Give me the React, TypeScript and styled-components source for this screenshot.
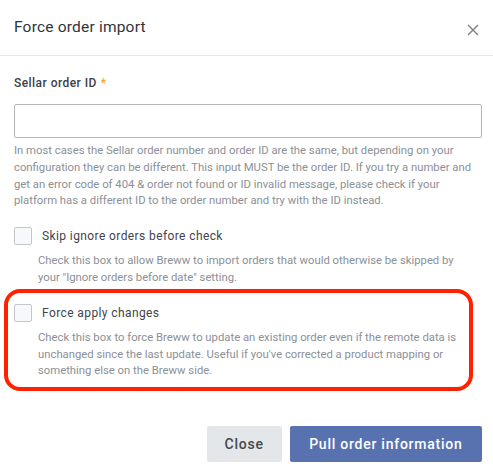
import React from "react";
import styled, { createGlobalStyle } from "styled-components";

const Global = createGlobalStyle`
  html, body { margin: 0; padding: 0; background: #ffffff; }
  body { font-family: Roboto, "Noto Sans", "Liberation Sans", sans-serif; -webkit-font-smoothing: antialiased; }
  * { box-sizing: border-box; }
`;

const Modal = styled.div`
  width: 493px;
  height: 467px;
  background: #fff;
  display: flex;
  flex-direction: column;
`;

const Header = styled.div`
  height: 56px;
  display: flex;
  align-items: center;
  justify-content: space-between;
  padding: 0 13px 2px 14px;
  border-bottom: 1px solid #e6e7e9;
`;

const Title = styled.h1`
  margin: 0;
  font-size: 15.5px;
  font-weight: 400;
  color: #30343b;
  letter-spacing: 0.2px;
`;

const CloseIcon = styled.button`
  border: 0;
  background: none;
  padding: 0;
  width: 14px;
  height: 14px;
  margin-top: 6px;
  display: flex;
  align-items: center;
  justify-content: center;
  color: #7b7e83;
`;

const Body = styled.div`
  padding: 18px 11px 0 14px;
  display: flex;
  flex-direction: column;
`;

const Label = styled.label`
  font-size: 12px;
  font-weight: 500;
  color: #3d4149;
  letter-spacing: 0.45px;
  line-height: 18px;
`;

const Required = styled.span`
  color: #f5a03c;
  margin-left: 4px;
`;

const Input = styled.input`
  margin-top: 12px;
  height: 34px;
  width: 468px;
  border: 1px solid #b3b5b9;
  border-radius: 2px;
  outline: none;
  font: inherit;
`;

const Help = styled.p<{ $indent?: boolean }>`
  margin: 5px 0 0 ${(p) => (p.$indent ? "24px" : "0")};
  font-size: 11.3px;
  line-height: 16.8px;
  color: #8b8f96;
  white-space: nowrap;
`;

const CheckSection = styled.div`
  position: relative;
  display: flex;
  flex-direction: column;
  margin-top: 17px;
`;

const CheckRow = styled.label`
  display: flex;
  align-items: center;
  gap: 10px;
  height: 18px;
`;

const Box = styled.span`
  width: 18px;
  height: 18px;
  border: 1px solid #c3c6cb;
  border-radius: 2px;
  background: #f6f8fb;
  flex: none;
`;

const CheckText = styled.span`
  font-size: 12px;
  color: #41454c;
  letter-spacing: 0.4px;
`;

const Highlight = styled.div`
  position: absolute;
  left: -10px;
  right: 9px;
  top: -15px;
  bottom: -11px;
  border: 4px solid #ff2200;
  border-radius: 16px;
  pointer-events: none;
`;

const Footer = styled.div`
  margin-top: auto;
  padding: 0 11px 5px 0;
  display: flex;
  justify-content: flex-end;
  gap: 8px;
`;

const Button = styled.button<{ $primary?: boolean }>`
  height: 36px;
  padding: 0 ${(p) => (p.$primary ? "19.5px" : "18px")};
  border: 0;
  border-radius: 2px;
  font-family: inherit;
  font-size: 14px;
  font-weight: 500;
  letter-spacing: 0.75px;
  background: ${(p) => (p.$primary ? "#5872b0" : "#e4e7ea")};
  color: ${(p) => (p.$primary ? "#ffffff" : "#45484d")};
`;

export default function App() {
  return (
    <>
      <Global />
      <Modal>
        <Header>
          <Title>Force order import</Title>
          <CloseIcon aria-label="Close">
            <svg width="12" height="12" viewBox="0 0 12 12">
              <path d="M1 1L11 11M11 1L1 11" stroke="currentColor" strokeWidth="1.4" />
            </svg>
          </CloseIcon>
        </Header>
        <Body>
          <Label>
            Sellar order ID<Required>*</Required>
          </Label>
          <Input />
          <Help>
            In most cases the Sellar order number and order ID are the same, but depending on your
            <br />
            configuration they can be different. This input MUST be the order ID. If you try a number and
            <br />
            get an error code of 404 &amp; order not found or ID invalid message, please check if your
            <br />
            platform has a different ID to the order number and try with the ID instead.
          </Help>
          <CheckSection>
            <CheckRow>
              <Box />
              <CheckText>Skip ignore orders before check</CheckText>
            </CheckRow>
            <Help $indent style={{ marginTop: 8 }}>
              Check this box to allow Breww to import orders that would otherwise be skipped by
              <br />
              your "Ignore orders before date" setting.
            </Help>
          </CheckSection>
          <CheckSection>
            <Highlight />
            <CheckRow>
              <Box />
              <CheckText>Force apply changes</CheckText>
            </CheckRow>
            <Help $indent style={{ marginTop: 8 }}>
              Check this box to force Breww to update an existing order even if the remote data is
              <br />
              unchanged since the last update. Useful if you've corrected a product mapping or
              <br />
              something else on the Breww side.
            </Help>
          </CheckSection>
        </Body>
        <Footer>
          <Button>Close</Button>
          <Button $primary>Pull order information</Button>
        </Footer>
      </Modal>
    </>
  );
}
